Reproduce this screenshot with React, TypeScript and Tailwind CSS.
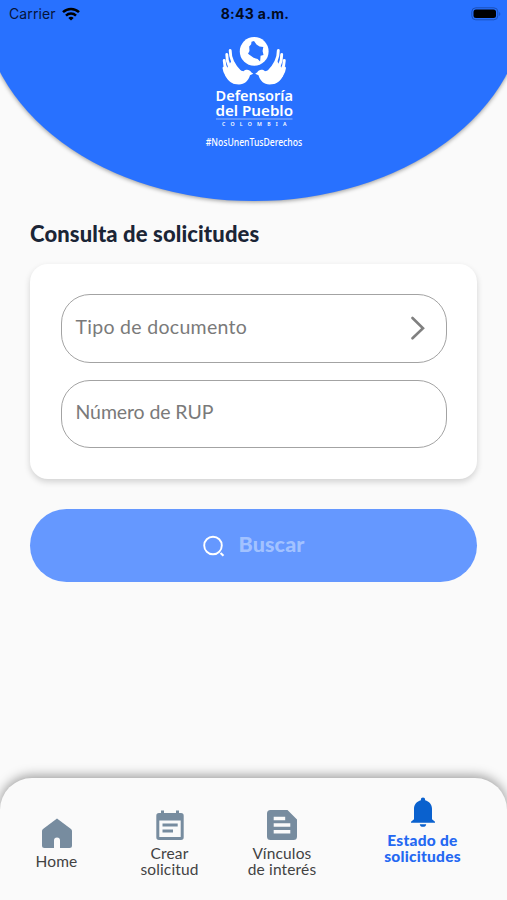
import React from "react";

interface FieldProps {
  label: string;
  hasArrow?: boolean;
}

interface NavItemProps {
  lines: string[];
  icon: React.ReactNode;
  active?: boolean;
}

const StatusBar: React.FC = () => (
  <div className="grid h-[27px] grid-cols-3 items-center pl-[9px] pr-[6px] font-['Inter',sans-serif] text-[14px] text-[#06143a]">
    <div className="flex items-center gap-[6px]">
      <span className="tracking-[0.1px]">Carrier</span>
      <svg width="18" height="14" viewBox="0 0 18 14" fill="none" stroke="#000" strokeWidth="2.5">
        <path d="M1 5.2a11.5 11.5 0 0 1 16 0" />
        <path d="M4 8.6a7.2 7.2 0 0 1 10 0" />
        <path d="M9 13.4 6.3 10.9a4 4 0 0 1 5.4 0z" fill="#000" stroke="none" />
      </svg>
    </div>
    <span className="text-center font-bold tracking-[0.3px] text-[#020a20]">8:43 a.m.</span>
    <svg className="justify-self-end" width="30" height="14" viewBox="0 0 30 14">
      <rect x="0.8" y="0.8" width="26" height="12" rx="4" fill="none" stroke="#1b50b8" />
      <rect x="2.5" y="2.5" width="22.5" height="8.6" rx="2.5" fill="#000" />
      <path d="M28.3 5v4c1.3-.6 1.3-3.4 0-4z" fill="#1b50b8" />
    </svg>
  </div>
);

// Open hand whose thumb ends as a dove's head
const Hand: React.FC = () => (
  <g>
    <path d="M29.500 27c2.500 6 6.500 9.500 12 10.200 2.500-2.400 6.500-1.700 7.700 1.100l2.100 1.500-3.300 1.500c-1.500 5.500-5.500 9.200-11 9.200-6.500 0-11-3.500-13.500-8.500l-.5-5z" />
    <g fill="none" stroke="#fff" strokeWidth="2.900" strokeLinecap="round">
      <path d="M28.200 16.500c-.2 7.500 4 15.500 10 21.500" />
      <path d="M24.800 20.500c-.2 7.500 3.500 15.500 10.500 21.500" />
      <path d="M22.200 26.500c0 6.500 3.800 13.500 10.800 18.500" />
      <path d="M22 34c.5 5 4 10 10 14" />
    </g>
  </g>
);

const Logo: React.FC = () => (
  <svg width="104" height="125" viewBox="0 0 104 125" fill="#fff">
    <circle cx="52.200" cy="17.400" r="14.400" />
    <path
      d="m49.500 7.800 2.500-.8 2.500 3.500 3 2 3.800.5-.7 4 .9 4-2.900.8-.5 5.700-2.500-2.500-4-1.200-5.600-4 1.500-2.800-.3-4.500 2-2.200z"
      fill="#2871ff"
    />
    <Hand />
    <g transform="translate(104.500 0) scale(-1 1)">
      <Hand />
    </g>
    <g fontFamily="'Noto Sans', sans-serif" fontWeight="600">
      <text x="13.500" y="66.500" fontSize="15" textLength="77.500" lengthAdjust="spacingAndGlyphs">
        Defensoría
      </text>
      <text x="13.500" y="82" fontSize="15" textLength="77.500" lengthAdjust="spacingAndGlyphs">
        del Pueblo
      </text>
      <text x="20" y="91.800" fontSize="5.200" textLength="64.500">
        COLOMBIA
      </text>
    </g>
    <path d="M14 85h76.500" stroke="#fff" strokeWidth="0.500" />
    <text
      x="3.700"
      y="112"
      fontSize="10.500"
      fontFamily="'Noto Sans', sans-serif"
      fontWeight="500"
      textLength="96.500"
      lengthAdjust="spacingAndGlyphs"
    >
      #NosUnenTusDerechos
    </text>
  </svg>
);

const Field: React.FC<FieldProps> = ({ label, hasArrow }) => (
  <button
    type="button"
    className="flex h-[68.500px] w-full items-center justify-between rounded-[29px] border border-[#a3a3a3] pb-1 pl-[13.500px] pr-5 text-left text-[19.500px] text-[#7a7a7a]"
  >
    <span className={hasArrow ? "tracking-[0.3px]" : "tracking-[-0.1px]"}>{label}</span>
    {hasArrow && (
      <svg className="mt-1" width="16" height="24" viewBox="0 0 16 24" fill="none" stroke="#808080" strokeWidth="2.600" strokeLinecap="round">
        <path d="m2.500 2 10.500 10.200L2.500 22.300" />
      </svg>
    )}
  </button>
);

const HomeIcon = (
  <svg width="30" height="30" viewBox="0 0 30 30" fill="#778c9f">
    <path d="M15 .5 29 11c.7.500 1 1.200 1 2v14.500a2.500 2.500 0 0 1-2.500 2.500H18v-7.500a3 3 0 0 0-6 0V30H2.500A2.500 2.500 0 0 1 0 27.500V13c0-.8.3-1.500 1-2z" />
  </svg>
);

const CalendarIcon = (
  <svg width="28" height="30" viewBox="0 0 28 30" fill="#778c9f">
    <path
      fillRule="evenodd"
      d="M5 .5h3V3h12V.5h3V3h2a2.700 2.700 0 0 1 2.700 2.700v21.600A2.700 2.700 0 0 1 25 30H3a2.700 2.700 0 0 1-2.700-2.700V5.700A2.700 2.700 0 0 1 3 3h2zM3.300 10.500V27h21.400V10.500z"
    />
    <path d="M6.500 13.500h15.200v3H6.500zM6.500 19.500H17v3H6.500z" />
  </svg>
);

const ArticleIcon = (
  <svg width="30" height="30" viewBox="0 0 30 30" fill="#778c9f">
    <path
      fillRule="evenodd"
      d="M3.500 0h17L30 9.500v17a3.500 3.500 0 0 1-3.500 3.500h-23A3.500 3.500 0 0 1 0 26.500v-23A3.500 3.500 0 0 1 3.500 0zM6.700 6.700v3.600h11.500V6.700zm0 6.600v3.400h16.600v-3.400zm0 6.700v3.400h16.600V20z"
    />
  </svg>
);

const BellIcon = (
  <svg width="26" height="30" viewBox="0 0 26 30" fill="#0a61ce">
    <path d="M13 .5c1.300 0 2.100.9 2.100 2v.7c4 .9 6.900 4.400 6.900 8.600v10.500l3 2.500v1H1v-1l3-2.500V11.800c0-4.200 2.900-7.700 6.900-8.600v-.7c0-1.100.8-2 2.100-2zM9.800 27.200h6.400c0 1.700-1.400 2.600-3.200 2.600s-3.200-.9-3.200-2.600z" />
  </svg>
);

const NavItem: React.FC<NavItemProps> = ({ lines, icon, active }) => (
  <a
    className={
      active
        ? "flex flex-col items-center gap-[5px] pb-[18px] text-center text-[15.500px] font-black leading-4 tracking-[0.250px] text-[#2468f2]"
        : "flex flex-col items-center gap-[5px] pt-[9px] text-center text-[15.500px] leading-4 tracking-[0.150px] text-[#424242]"
    }
  >
    {icon}
    <span>
      {lines.map((line) => (
        <span key={line} className="block whitespace-nowrap">
          {line}
        </span>
      ))}
    </span>
  </a>
);

const App: React.FC = () => {
  return (
    <div className="flex h-[900px] w-[507px] flex-col overflow-hidden bg-[#fafafa] font-['Lato',sans-serif]">
      <header className="-mx-[18.500px] flex h-[201px] shrink-0 flex-col items-center rounded-[0_0_50%_50%/0_0_100%_100%] bg-[#2871ff] shadow-[0_1px_4px_rgba(0,0,0,0.4)]">
        <div className="w-[507px]">
          <StatusBar />
        </div>
        <div className="pt-[7px]">
          <Logo />
        </div>
      </header>

      <main className="flex grow flex-col px-[30px] pt-[18px]">
        <h1 className="text-[22px] font-black leading-[30px] tracking-[0.120px] text-[#1b2536]">Consulta de solicitudes</h1>
        <section className="mt-[15px] flex h-[215px] flex-col gap-[17px] rounded-[18px] bg-white pl-[31px] pr-[30px] pt-[30px] shadow-[0_3px_6px_rgba(0,0,0,0.16)]">
          <Field label="Tipo de documento" hasArrow />
          <Field label="Número de RUP" />
        </section>
        <button
          type="button"
          disabled
          className="mt-[30px] flex h-[73px] items-center justify-center gap-[14px] rounded-full bg-[#6598ff] text-[21.500px] font-black tracking-[0.1px] text-[#a2c2ff]"
        >
          <svg width="22" height="22" viewBox="0 0 22 22" fill="none" stroke="#fff" strokeWidth="1.900">
            <circle cx="10" cy="10.500" r="8.800" />
            <path d="m17.500 18 3 2.700" strokeWidth="2.200" />
          </svg>
          <span className="pb-[3px]">Buscar</span>
        </button>
      </main>

      <nav className="grid h-[122px] shrink-0 grid-cols-[113px_113px_112px_169px] items-center rounded-t-[32px] bg-[#fafafa] shadow-[0_-2px_12px_rgba(0,0,0,0.4)]">
        <NavItem lines={["Home"]} icon={HomeIcon} />
        <NavItem lines={["Crear", "solicitud"]} icon={CalendarIcon} />
        <NavItem lines={["Vínculos", "de interés"]} icon={ArticleIcon} />
        <NavItem lines={["Estado de", "solicitudes"]} icon={BellIcon} active />
      </nav>
    </div>
  );
};

export default App;
